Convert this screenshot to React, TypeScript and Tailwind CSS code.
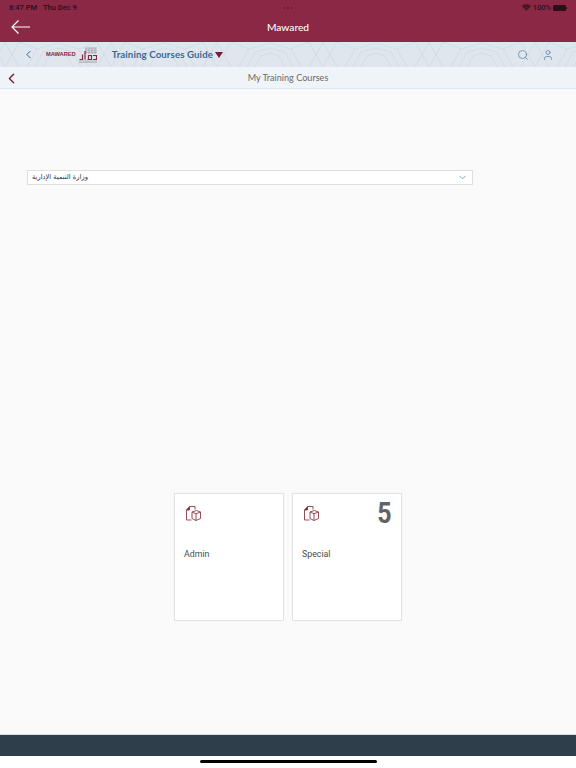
import { ChevronDown, ChevronLeft, Search, User, Wifi } from "lucide-react";

const ARABIC = '"DejaVu Sans", sans-serif';

const GirihPattern = () => (
  <svg className="absolute inset-0 h-full w-full" aria-hidden="true">
    <defs>
      <pattern id="girih" width="106" height="25" patternUnits="userSpaceOnUse" x="5">
        <g fill="none" stroke="#ced7e2" strokeWidth="0.7">
          <path d="M0 0 L14 25 M14 0 L0 25 M92 25 L106 0 M92 0 L106 25" />
          <path d="M22 25 L32 7 L53 1 L74 7 L84 25" />
          <path d="M30 25 L38 10 L53 6 L68 10 L76 25" />
          <path d="M38 25 L44 14 L53 11 L62 14 L68 25" />
          <path d="M14 0 L32 7 M92 0 L74 7" />
        </g>
      </pattern>
    </defs>
    <rect width="100%" height="100%" fill="url(#girih)" />
  </svg>
);

const MawaredLogo = () => (
  <div className="flex items-center gap-[3px]">
    <span className="font-['Liberation_Sans',sans-serif] text-[5.7px] leading-none font-bold text-[#8a2846]">MAWARED</span>
    <svg width="18" height="16" viewBox="0 0 18 16" aria-hidden="true">
      <path d="M6 1h12M6 3.200h12M6 5.400h12M0 14h18M0 15.800h18" stroke="#a9a6ad" strokeWidth="0.9" />
      <path d="M7 1v6M10 1v6M13 1v6M16 1v6" stroke="#a9a6ad" strokeWidth="0.9" />
      <path d="M0.500 12.500h3v-5M6 12.500V4M8.500 12.500h4v-4h-3v4M14 12.500h3.500v-4H14" fill="none" stroke="#8a2846" strokeWidth="1.200" />
    </svg>
  </div>
);

const CoursesIcon = () => (
  <svg width="17" height="17" viewBox="0 0 17 17" fill="none" stroke="#8a3a45" strokeWidth="0.9" aria-hidden="true">
    <path d="M4.500 1.500H10V4.500M1.500 5V15H6.500" />
    <path d="M1.500 5 L4.500 1.500 V5 Z" fill="#7a1f30" />
    <path d="M7 7 L11.500 5.500 L15.500 7 V13.500 L11 15.500 L7 13.500 Z" />
    <path d="M7 7 L11 8.800 L15.500 7 M11 8.800 V15.500" />
  </svg>
);

interface ICard {
  name: string;
  count?: number;
}

const cards: ICard[] = [{ name: "Admin" }, { name: "Special", count: 5 }];

const CourseCard = ({ name, count }: ICard) => (
  <div className="h-[128px] w-[110px] border border-[#e3e3e3] bg-white pt-[11px] pr-[9px] pl-[10px] shadow-[0_0_1px_rgba(0,0,0,0.08)]">
    <div className="flex h-[17px] items-center justify-between">
      <CoursesIcon />
      {count !== undefined && (
        <span className="origin-right scale-x-[0.86] font-['Roboto',sans-serif] text-[29px] leading-none font-bold text-[#636363]">{count}</span>
      )}
    </div>
    <div className="mt-[25px] -ml-[1px] font-['Roboto',sans-serif] text-[8.8px] leading-[14px] text-[#4a4a4a]">{name}</div>
  </div>
);

export default function App() {
  return (
    <div className="flex h-[768px] w-[576px] flex-col overflow-hidden bg-[#fafafa] font-['Lato',sans-serif]">
      <header className="h-[42px] shrink-0 bg-[#8a2846]">
        <div className="grid h-[14px] grid-cols-3 items-center pt-[1px] pr-[9px] pl-[9px] font-['Roboto',sans-serif] text-[7.5px] font-medium text-[#2a0f18]">
          <div className="flex gap-[6px]">
            <span>8:47 PM</span>
            <span>Thu Dec 9</span>
          </div>
          <div className="flex justify-center gap-[2px]">
            <span className="h-[2px] w-[2px] rounded-full bg-[#6a1c34]" />
            <span className="h-[2px] w-[2px] rounded-full bg-[#6a1c34]" />
            <span className="h-[2px] w-[2px] rounded-full bg-[#6a1c34]" />
          </div>
          <div className="flex items-center justify-end gap-[2px]">
            <Wifi size={9} strokeWidth={3} />
            <span>100%</span>
            <span className="flex items-center">
              <span className="h-[6px] w-[13px] rounded-[1.5px] bg-[#2a0f18]" />
              <span className="h-[2px] w-[1px] bg-[#2a0f18]" />
            </span>
          </div>
        </div>
        <div className="relative flex h-[28px] items-center justify-center">
          <svg className="absolute top-[5px] left-[11px]" width="20" height="16" viewBox="0 0 20 16" fill="none" stroke="white" strokeWidth="1.2" aria-hidden="true">
            <path d="M19 8H1M7.500 1.500L1 8l6.500 6.500" />
          </svg>
          <span className="text-[10.2px] font-medium text-white">Mawared</span>
        </div>
      </header>

      <div className="relative flex h-[25px] shrink-0 items-center bg-[#dfe6ee]">
        <GirihPattern />
        <div className="relative flex w-full items-center pr-[22px] pl-[22px]">
          <ChevronLeft size={13} strokeWidth={1.8} className="text-[#2f6593]" />
          <div className="ml-[11px]">
            <MawaredLogo />
          </div>
          <span className="ml-[15px] text-[9.7px] font-bold tracking-[0.1px] text-[#3a6a94]">Training Courses Guide</span>
          <span className="ml-[2px] h-0 w-0 border-t-[6px] border-r-[4.5px] border-l-[4.5px] border-t-[#7a1f30] border-r-transparent border-l-transparent" />
          <div className="ml-auto flex items-center gap-[13px] text-[#4e7ba3]">
            <Search size={12} strokeWidth={1.4} />
            <User size={12} strokeWidth={1.4} />
          </div>
        </div>
      </div>

      <div className="relative flex h-[22px] shrink-0 items-center justify-center border-b border-[#dbe6f0] bg-[#eff4f9] pt-[1px]">
        <ChevronLeft size={17} strokeWidth={2} className="absolute left-[3px] text-[#7a1f30]" />
        <span className="text-[9.1px] text-[#6b6b6b]">My Training Courses</span>
      </div>

      <main className="flex flex-1 flex-col">
        <div className="mt-[81px] ml-[27px] flex h-[15px] w-[446px] items-center justify-between border border-[#dedede] bg-white pr-[4px] pl-[4px]">
          <span dir="rtl" style={{ fontFamily: ARABIC }} className="text-[6.7px] leading-none text-[#333333]">
            وزارة التنمية الإدارية
          </span>
          <ChevronDown size={11} strokeWidth={1.6} className="text-[#4f82ad]" />
        </div>
        <div className="mt-[308px] flex justify-center gap-[8px]">
          {cards.map((card) => (
            <CourseCard key={card.name} {...card} />
          ))}
        </div>
      </main>

      <div className="h-[22px] shrink-0 border-t border-[#d9dde0] bg-[#2f3e4b]" />
      <div className="flex h-[12px] shrink-0 items-start justify-center bg-white pt-[4px]">
        <div className="h-[3px] w-[177px] rounded-full bg-black" />
      </div>
    </div>
  );
}
